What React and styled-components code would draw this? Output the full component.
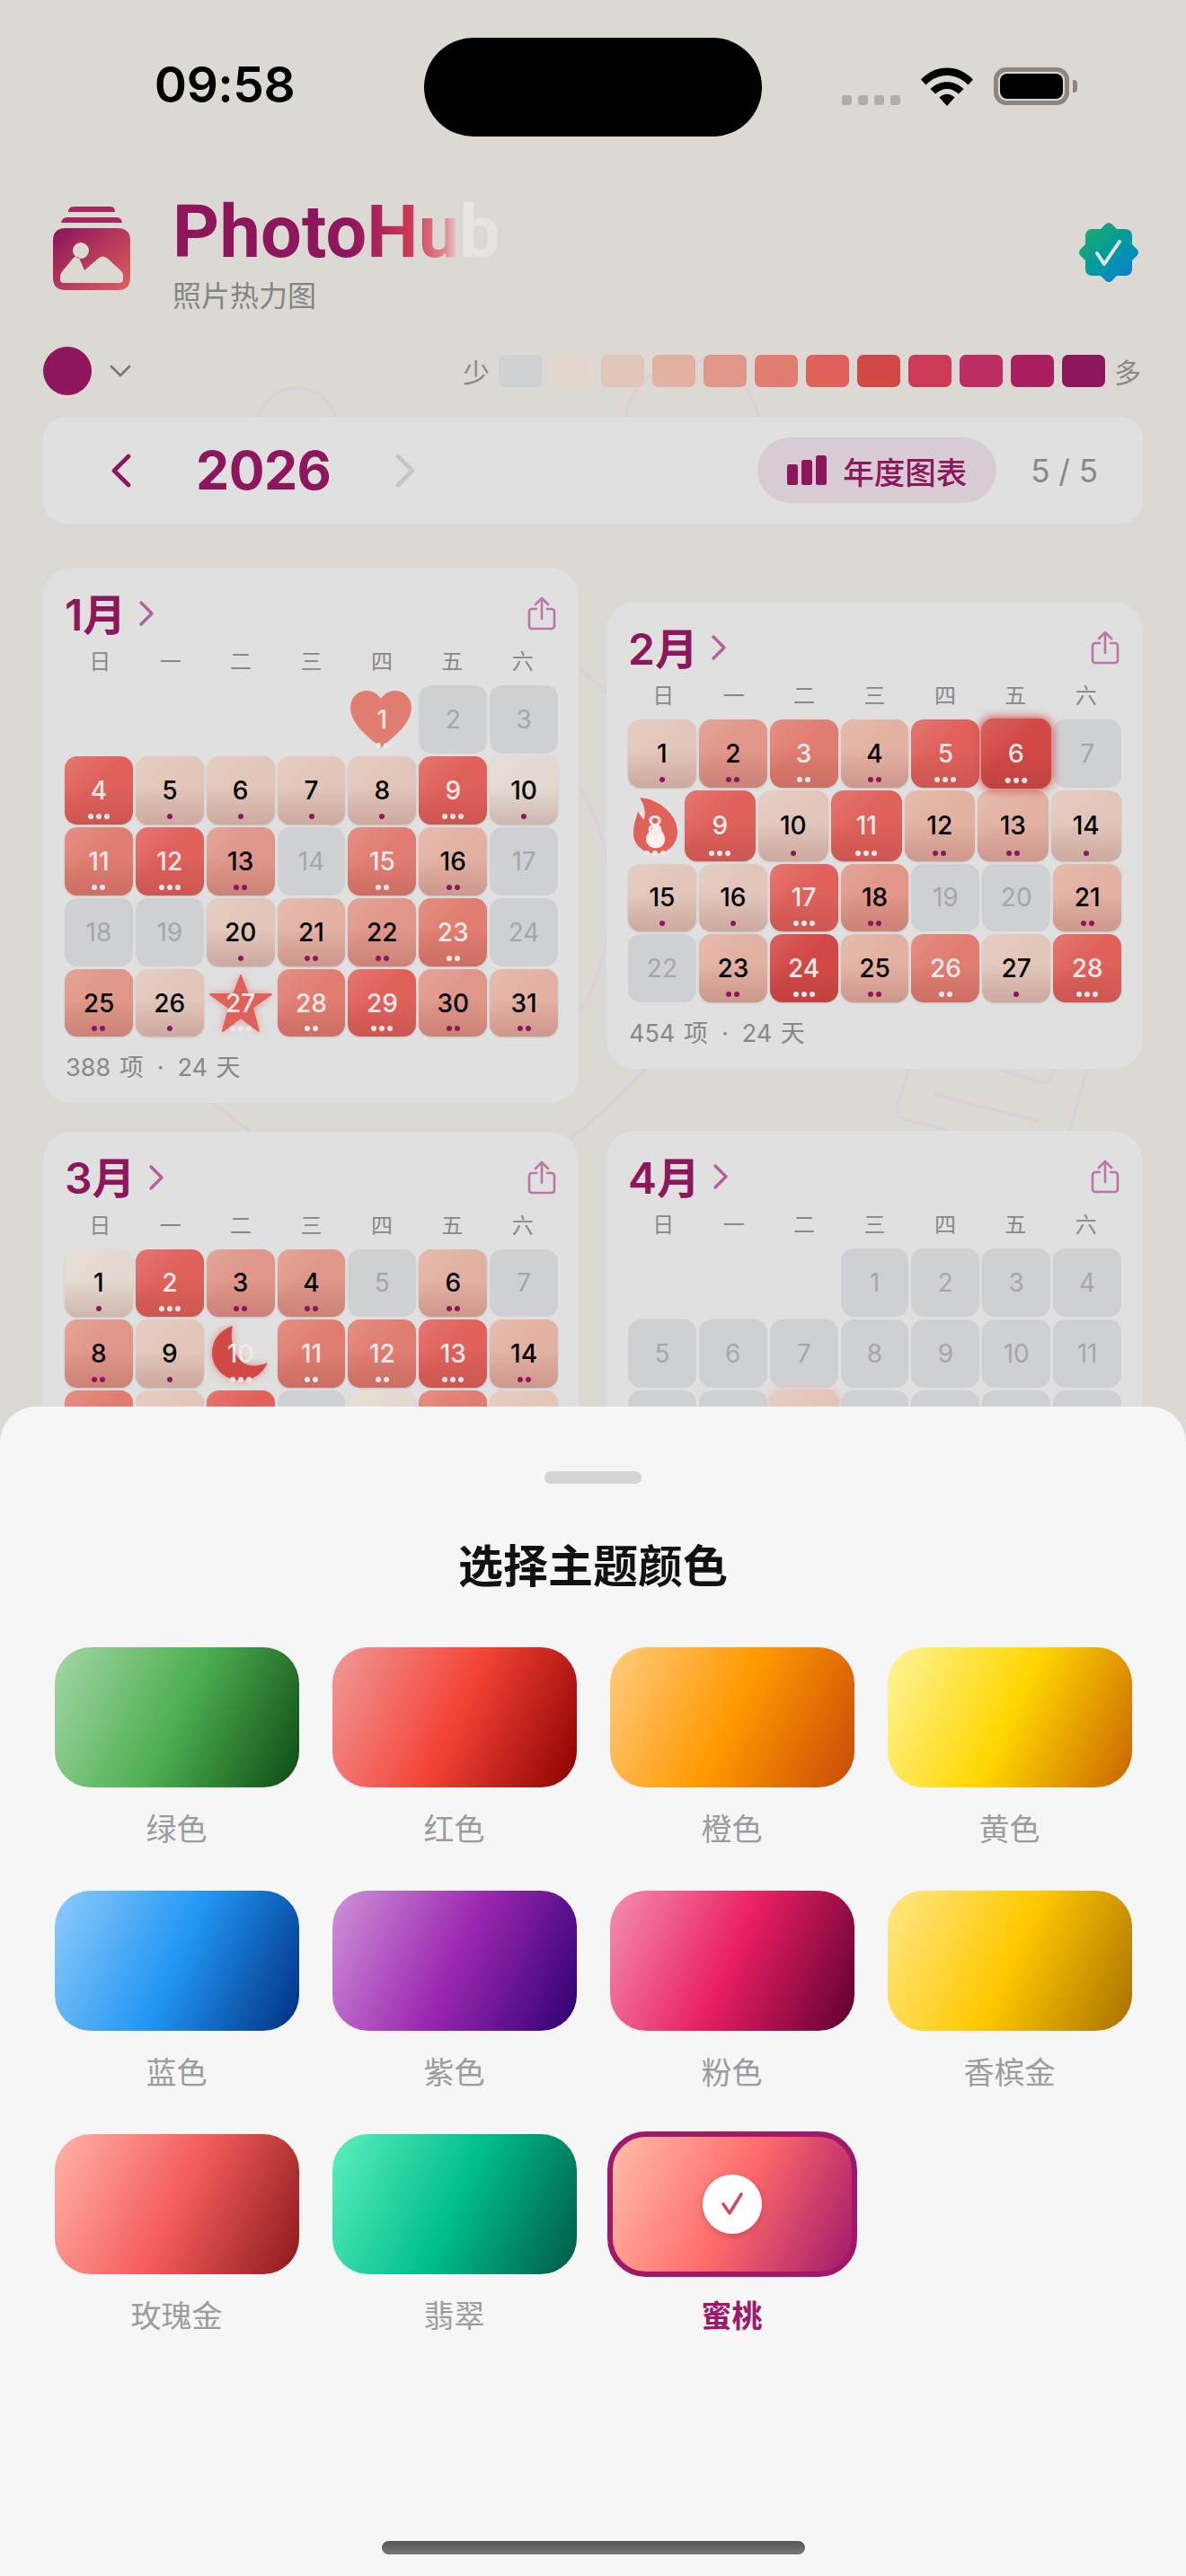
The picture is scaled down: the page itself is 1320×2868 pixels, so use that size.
import styled, { createGlobalStyle } from 'styled-components'

const FONT = `Inter, "Noto Sans CJK SC", "Noto Sans", sans-serif`
const PLUM = '#8e165c'

const LEGEND = ['#cfd0d4', '#e2d8ce', '#e2c6b9', '#e2b1a2', '#e09688', '#e07d70', '#e0605a', '#d24845', '#cd3a55', '#bd2c62', '#ab1e60', PLUM]
const LEVELS = ['#cfd0d4', '#e3d9d0', '#e2c6b9', '#e2b1a2', '#e09688', '#e07d70', '#e0605a', '#d24845']
const DOTS = [0, 1, 1, 2, 2, 2, 3, 3]

const MONTHS = [
    {
        name: '1月', start: 4, footer: ['388 项', '24 天'],
        levels: [5, 0, 0, 6, 2, 2, 2, 2, 6, 1, 5, 6, 4, 0, 5, 3, 0, 0, 0, 2, 3, 4, 5, 0, 4, 2, 6, 5, 6, 4, 3],
        shapes: { 1: 'heart', 27: 'star' },
    },
    {
        name: '2月', start: 0, footer: ['454 项', '24 天'],
        levels: [2, 4, 5, 3, 6, 7, 0, 6, 6, 2, 6, 3, 3, 2, 2, 2, 6, 4, 0, 0, 3, 0, 3, 7, 3, 5, 2, 6],
        shapes: { 8: 'flame' },
        hot: [6],
    },
    {
        name: '3月', start: 0,
        levels: [1, 6, 4, 4, 0, 3, 0, 4, 2, 7, 5, 5, 6, 3, 5, 2, 6, 0, 1, 5, 2, 0, 0, 0, 0, 0, 0, 0, 0, 0, 0],
        shapes: { 10: 'moon' },
    },
    {
        name: '4月', start: 3,
        levels: [0, 0, 0, 0, 0, 0, 0, 0, 0, 0, 0, 0, 0, 2, 0, 0, 0, 0, 0, 0, 0, 0, 0, 0, 0, 0, 0, 0, 0, 0],
        hot: [14],
    },
]

const THEMES = [
    { name: '绿色', colors: ['#a5d6a7', '#4caf50', '#0e4a14'] },
    { name: '红色', colors: ['#ef9a9a', '#f44336', '#8b0000'] },
    { name: '橙色', colors: ['#ffcc80', '#ff9800', '#c84a08'] },
    { name: '黄色', colors: ['#fff59d', '#ffd600', '#c86400'] },
    { name: '蓝色', colors: ['#90caf9', '#2196f3', '#002f80'] },
    { name: '紫色', colors: ['#ce93d8', '#9c27b0', '#2e0070'] },
    { name: '粉色', colors: ['#f48fb1', '#e91e63', '#5c0030'] },
    { name: '香槟金', colors: ['#ffe88a', '#ffc800', '#a87000'] },
    { name: '玫瑰金', colors: ['#ffb3a7', '#f45c5c', '#8b1a1a'] },
    { name: '翡翠', colors: ['#5eeebf', '#00bf8c', '#005a44'] },
    { name: '蜜桃', colors: ['#ffc0a9', '#ff6b6b', '#a0186a'], selected: true },
]

function buildWeeks(month) {
    const cells = Array(month.start).fill(null)
    month.levels.forEach((level, i) => cells.push({ day: i + 1, level }))
    while (cells.length % 7 !== 0) cells.push(null)
    const weeks = []
    for (let i = 0; i < cells.length; i += 7) weeks.push(cells.slice(i, i + 7))
    return weeks
}

function DayShape({ type }) {
    if (type === 'heart') {
        return (
            <ShapeSvg viewBox="0 0 76 76">
                <path fill="#e07d70" d="M37 70C30 62 3 46 3 25C3 13 12 6 21 6C28 6 34 10 37 15C40 10 46 6 53 6C62 6 71 13 71 25C71 46 44 62 37 70Z" />
            </ShapeSvg>
        )
    }
    if (type === 'star') {
        return (
            <ShapeSvg viewBox="0 0 76 76" $glow="rgba(224,96,90,.55)">
                <polygon fill="#e0605a" stroke="#e0605a" strokeWidth="2" strokeLinejoin="round" points="38,7 46,28 72,28 51,43 58,69 38,54 18,69 25,43 4,28 30,28" />
            </ShapeSvg>
        )
    }
    if (type === 'moon') {
        return (
            <ShapeSvg viewBox="0 0 76 76" $glow="rgba(210,72,69,.55)">
                <path fill="#d24845" d="M29 7C14 12 6 24 6 37C6 54 20 68 38 68C52 68 63 60 68 48C60 52 50 53 42 49C31 43 25 24 29 7Z" />
            </ShapeSvg>
        )
    }
    return (
        <ShapeSvg viewBox="0 0 60 78">
            <path fill="#e0605a" d="M13 8C30 8 55 24 55 46C55 60 44 70 31 70C17 70 6 60 6 48C6 38 9 31 11 23C13 27 16 31 18 32C20 24 18 15 13 8Z" />
            <path fill="#fff" opacity=".9" d="M31 37C27 37 26 40 27 43C23 46 20 49 20 54C20 60 25 64 31 64C37 64 41 60 41 54C41 49 38 45 35 43C36 40 35 37 31 37Z" />
        </ShapeSvg>
    )
}

function DayCell({ cell, shape, hot, narrow }) {
    const light = cell.level >= 5 || Boolean(shape)
    return (
        <Day $level={cell.level} $shape={Boolean(shape)} $hot={hot} $narrow={narrow}>
            {shape && <DayShape type={shape} />}
            <DayNumber $level={cell.level} $light={light}>{cell.day}</DayNumber>
            {cell.level > 0 && (
                <DayDots>
                    {Array.from({ length: DOTS[cell.level] }).map((_, i) => <Dot key={i} $light={light} />)}
                </DayDots>
            )}
        </Day>
    )
}

function MonthCard({ month }) {
    const weeks = buildWeeks(month)
    return (
        <Card>
            <CardHead>
                <MonthName>{month.name}</MonthName>
                <svg width="18" height="30" viewBox="0 0 18 30" fill="none" stroke="#b5609a" strokeWidth="3.4" strokeLinecap="round" strokeLinejoin="round">
                    <path d="M3 3L15 15L3 27" />
                </svg>
                <ShareIcon width="32" height="38" viewBox="0 0 32 38" fill="none" stroke="#bb76a4" strokeWidth="2.6" strokeLinecap="round" strokeLinejoin="round">
                    <path d="M10 14H5A3 3 0 0 0 2 17V33A3 3 0 0 0 5 36H27A3 3 0 0 0 30 33V17A3 3 0 0 0 27 14H22" />
                    <path d="M16 25V2M9 9L16 2L23 9" />
                </ShareIcon>
            </CardHead>
            <WeekLabels>
                {['日', '一', '二', '三', '四', '五', '六'].map((d) => <span key={d}>{d}</span>)}
            </WeekLabels>
            <Weeks>
                {weeks.map((week, w) => (
                    <Week key={w}>
                        {week.map((cell, i) => {
                            if (!cell) return <Blank key={i} />
                            const shape = month.shapes && month.shapes[cell.day]
                            return (
                                <DayCell
                                    key={i}
                                    cell={cell}
                                    shape={shape}
                                    narrow={shape === 'flame'}
                                    hot={month.hot && month.hot.includes(cell.day)}
                                />
                            )
                        })}
                    </Week>
                ))}
            </Weeks>
            {month.footer && (
                <CardFooter>
                    {month.footer[0]}
                    <FooterDot>·</FooterDot>
                    {month.footer[1]}
                </CardFooter>
            )}
        </Card>
    )
}

export default function App() {
    return (
        <Screen>
            <GlobalStyle />
            <Backdrop viewBox="0 0 1320 1566" fill="none" stroke="#d9d0da" strokeWidth="3">
                <circle cx="330" cy="477" r="45" />
                <circle cx="770" cy="477" r="75" />
                <path d="M636 738Q660 754 684 782" />
                <path d="M640 868A245 245 0 0 1 640 1135" />
                <path d="M225 1218Q250 1238 282 1262" />
                <path d="M725 1183Q690 1225 625 1275" />
                <path d="M1011 1191L999 1231Q997 1242 1006 1246L1058 1259" />
                <path d="M1040 1218L1157 1249" />
                <path d="M1113 1191L1160 1205Q1168 1206 1173 1191" />
                <path d="M1210 1191L1190 1259" />
            </Backdrop>

            <StatusBar>
                <Clock>09:58</Clock>
                <Island />
                <StatusIcons>
                    <SignalDots>{[0, 1, 2, 3].map((i) => <SignalDot key={i} />)}</SignalDots>
                    <svg width="58" height="43" viewBox="0 0 58 43">
                        <path d="M0 13.500C16 -4 42 -4 58 13.500L52.500 19.500C39 5.500 19 5.500 5.500 19.500Z" />
                        <path d="M10.500 24C21 13.500 37 13.500 47.500 24L42 29.500C34 22 24 22 16 29.500Z" />
                        <path d="M20.500 33.500C26 28.500 32 28.500 37.500 33.500L29 43Z" />
                    </svg>
                    <Battery>
                        <BatteryBody><BatteryFill /></BatteryBody>
                        <BatteryNub />
                    </Battery>
                </StatusIcons>
            </StatusBar>

            <Header>
                <svg width="88" height="94" viewBox="0 0 88 94">
                    <defs>
                        <linearGradient id="logoGrad" x1="0" y1="0.1" x2="1" y2="1">
                            <stop offset="0" stopColor="#8e165c" />
                            <stop offset="1" stopColor="#e0605a" />
                        </linearGradient>
                    </defs>
                    <path fill="#a8265e" d="M18 6Q18 0 24 0H65Q70 0 70 6Z" />
                    <path fill="#a8265e" d="M10 18Q11 12 17 12H72Q77 12 78 18Z" />
                    <path fill="url(#logoGrad)" fillRule="evenodd" d="M15 24H73Q87 24 87 38V79Q87 93 73 93H15Q1 93 1 79V38Q1 24 15 24ZM32 40A9 9 0 1 0 32 58A9 9 0 1 0 32 40ZM13 70Q9 74 9 78V81Q9 85 13 85H75Q79 85 79 81V76Q79 73 76 71L62 58Q56 53 51 58L36 71L30 57Q26 54 23 58Z" />
                </svg>
                <Brand>
                    <Title>PhotoHub</Title>
                    <Subtitle>照片热力图</Subtitle>
                </Brand>
                <Badge width="68" height="68" viewBox="0 0 68 68">
                    <defs>
                        <linearGradient id="badgeGrad" gradientUnits="userSpaceOnUse" x1="8" y1="8" x2="60" y2="60">
                            <stop offset="0" stopColor="#1fa96c" />
                            <stop offset="0.5" stopColor="#009c9c" />
                            <stop offset="1" stopColor="#0a7ed2" />
                        </linearGradient>
                    </defs>
                    <rect x="8" y="8" width="52" height="52" rx="7" fill="url(#badgeGrad)" />
                    <path fill="url(#badgeGrad)" d="M30.500 2.500Q34 -0.500 37.500 2.500L65.500 30.500Q68.500 34 65.500 37.500L37.500 65.500Q34 68.500 30.500 65.500L2.500 37.500Q-0.500 34 2.500 30.500Z" />
                    <path fill="none" stroke="#e4e4e4" strokeWidth="4" strokeLinecap="round" strokeLinejoin="round" d="M21 35L29 47L46 22" />
                </Badge>
            </Header>

            <Controls>
                <ThemeDot />
                <svg width="24" height="16" viewBox="0 0 24 16" fill="none" stroke="#777" strokeWidth="2.6" strokeLinecap="round" strokeLinejoin="round">
                    <path d="M2 3L12 13L22 3" />
                </svg>
                <Legend>
                    <LegendText>少</LegendText>
                    <LegendCells>
                        {LEGEND.map((color) => <LegendCell key={color} $color={color} />)}
                    </LegendCells>
                    <LegendText>多</LegendText>
                </Legend>
            </Controls>

            <YearBar>
                <svg width="22" height="38" viewBox="0 0 22 38" fill="none" stroke={PLUM} strokeWidth="4.6" strokeLinecap="round" strokeLinejoin="round">
                    <path d="M19 3L3 19L19 35" />
                </svg>
                <Year>2026</Year>
                <svg width="22" height="38" viewBox="0 0 22 38" fill="none" stroke="#c6c6c6" strokeWidth="4.6" strokeLinecap="round" strokeLinejoin="round">
                    <path d="M3 3L19 19L3 35" />
                </svg>
                <ChartButton>
                    <svg width="44" height="33" viewBox="0 0 44 33" fill={PLUM}>
                        <rect x="0" y="10" width="12" height="23" rx="2.500" />
                        <rect x="16" y="5" width="12" height="28" rx="2.500" />
                        <rect x="32" y="0" width="12" height="33" rx="2.500" />
                    </svg>
                    年度图表
                </ChartButton>
                <PageCount>5 / 5</PageCount>
            </YearBar>

            <MonthGrid>
                {MONTHS.map((month) => <MonthCard key={month.name} month={month} />)}
            </MonthGrid>

            <Sheet>
                <Handle />
                <SheetTitle>选择主题颜色</SheetTitle>
                <ThemeGrid>
                    {THEMES.map((theme) => (
                        <ThemeItem key={theme.name}>
                            <Swatch $colors={theme.colors} $selected={theme.selected}>
                                {theme.selected && (
                                    <CheckMark>
                                        <svg width="30" height="30" viewBox="0 0 30 30" fill="none" stroke="#c9505a" strokeWidth="3.6" strokeLinecap="round" strokeLinejoin="round">
                                            <path d="M5 15L12 25L25 4" />
                                        </svg>
                                    </CheckMark>
                                )}
                            </Swatch>
                            <ThemeName $selected={theme.selected}>{theme.name}</ThemeName>
                        </ThemeItem>
                    ))}
                </ThemeGrid>
                <HomeBar />
            </Sheet>
        </Screen>
    )
}

const GlobalStyle = createGlobalStyle`
    html, body {
        margin: 0;
        padding: 0;
        background: #dcd8d4;
    }
    * {
        box-sizing: border-box;
    }
`

const Screen = styled.div`
    position: relative;
    width: 1320px;
    height: 2868px;
    overflow: hidden;
    background: #dcd8d4;
    font-family: ${FONT};
    display: flex;
    flex-direction: column;
`

const Backdrop = styled.svg`
    position: absolute;
    top: 0;
    left: 0;
    width: 1320px;
    height: 1566px;
`

const StatusBar = styled.div`
    position: relative;
    display: grid;
    grid-template-columns: 472px 376px 1fr;
    align-items: center;
    padding-top: 42px;
    height: 152px;
`

const Clock = styled.div`
    font-size: 55px;
    font-weight: 600;
    text-align: center;
    color: #000;
    padding-left: 28px;
    margin-top: -6px;
    letter-spacing: -0.5px;
`

const Island = styled.div`
    height: 110px;
    border-radius: 55px;
    background: #000;
`

const StatusIcons = styled.div`
    display: flex;
    align-items: flex-start;
    padding: 0 0 0 89px;
    gap: 23px;
    margin-top: -2px;
`

const SignalDots = styled.div`
    display: flex;
    gap: 7px;
    margin-top: 31px;
`

const SignalDot = styled.div`
    width: 11px;
    height: 11px;
    border-radius: 3px;
    background: #b2ada8;
`

const Battery = styled.div`
    display: flex;
    align-items: center;
    gap: 4px;
`

const BatteryBody = styled.div`
    width: 84px;
    height: 42px;
    border: 5px solid #8b8682;
    border-radius: 14px;
    padding: 2px;
`

const BatteryFill = styled.div`
    height: 100%;
    border-radius: 8px;
    background: #000;
`

const BatteryNub = styled.div`
    width: 5px;
    height: 14px;
    border-radius: 0 4px 4px 0;
    background: #8b8682;
`

const Header = styled.div`
    position: relative;
    display: flex;
    align-items: flex-start;
    gap: 46px;
    padding: 78px 52px 0 58px;
    height: 234px;
`

const Brand = styled.div`
    display: flex;
    flex-direction: column;
    margin-top: -19px;
`

const Title = styled.div`
    width: 366px;
    font-family: Roboto, ${FONT};
    font-size: 81px;
    font-weight: 700;
    line-height: 96px;
    letter-spacing: 0.2px;
    color: transparent;
    background: linear-gradient(to right, ${PLUM} 0%, ${PLUM} 54%, #cd3755 72%, #e08a90 83%, #e9e6e4 88%, #e4e2e0 100%);
    -webkit-background-clip: text;
    background-clip: text;
`

const Subtitle = styled.div`
    font-size: 32px;
    line-height: 46px;
    color: #858585;
`

const Badge = styled.svg`
    margin-left: auto;
    margin-top: 17px;
`

const Controls = styled.div`
    position: relative;
    display: flex;
    align-items: center;
    gap: 20px;
    padding: 0 50px 0 48px;
    height: 54px;
`

const ThemeDot = styled.div`
    width: 54px;
    height: 54px;
    border-radius: 50%;
    background: ${PLUM};
`

const Legend = styled.div`
    margin-left: auto;
    display: flex;
    align-items: center;
    gap: 10px;
`

const LegendText = styled.span`
    font-size: 30px;
    color: #888;
`

const LegendCells = styled.div`
    display: flex;
    gap: 9px;
`

const LegendCell = styled.div`
    width: 48px;
    height: 36px;
    border-radius: 7px;
    background: ${(p) => p.$color};
`

const YearBar = styled.div`
    position: relative;
    display: flex;
    align-items: center;
    gap: 72px;
    margin: 24px 48px 0;
    height: 119px;
    padding: 0 50px 0 76px;
    border-radius: 26px;
    background: #e0e0e0;
`

const Year = styled.div`
    font-size: 59px;
    font-weight: 700;
    color: ${PLUM};
    letter-spacing: -0.5px;
`

const ChartButton = styled.div`
    margin-left: auto;
    display: flex;
    align-items: center;
    gap: 18px;
    height: 73px;
    padding: 0 33px;
    border-radius: 37px;
    background: #d8ccd4;
    font-size: 34.500px;
    font-weight: 500;
    color: ${PLUM};
`

const PageCount = styled.div`
    margin-left: -34px;
    font-size: 35px;
    color: #888;
`

const MonthGrid = styled.div`
    position: relative;
    display: grid;
    grid-template-columns: 596px 596px;
    column-gap: 31px;
    row-gap: 31px;
    align-items: center;
    padding: 0 48px;
    margin-top: 49px;
`

const Card = styled.div`
    padding: 24px 23px 19px 24px;
    border-radius: 32px;
    background: #e0e0e0;
`

const CardHead = styled.div`
    display: flex;
    align-items: center;
    gap: 14px;
    height: 54px;
    margin-bottom: 10px;
`

const MonthName = styled.div`
    margin-top: -5px;
    font-size: 48px;
    font-weight: 600;
    color: ${PLUM};
`

const ShareIcon = styled.svg`
    margin-left: auto;
    margin-right: 2px;
`

const WeekLabels = styled.div`
    display: grid;
    grid-template-columns: repeat(7, 1fr);
    height: 34px;
    margin-bottom: 9px;
    line-height: 34px;
    text-align: center;
    font-size: 24px;
    color: #888;
`

const Weeks = styled.div`
    display: flex;
    flex-direction: column;
    gap: 3px;
`

const Week = styled.div`
    display: flex;
    gap: 3px;
`

const Blank = styled.div`
    flex: 1 1 0;
    height: 76px;
`

const levelBackground = (level) => {
    if (level === 0) return LEVELS[0]
    return `linear-gradient(to bottom, rgba(120,50,50,0) 45%, rgba(120,50,50,.2) 100%), linear-gradient(135deg, rgba(255,255,255,.14), rgba(255,255,255,0) 45%), ${LEVELS[level]}`
}

const Day = styled.div`
    position: relative;
    flex: ${(p) => (p.$narrow ? '0 0 60px' : '1 1 0')};
    min-width: 0;
    aspect-ratio: ${(p) => (p.$narrow ? 'auto' : '1')};
    display: flex;
    align-items: center;
    justify-content: center;
    border-radius: 14px;
    background: ${(p) => (p.$shape ? 'none' : levelBackground(p.$level))};
    box-shadow: ${(p) => {
        if (p.$shape || p.$level === 0) return 'none'
        return p.$hot ? `0 0 10px ${LEVELS[p.$level]}` : '0 1px 2px rgba(90,60,60,.2)'
    }};
    transform: ${(p) => (p.$hot ? 'scale(1.03)' : 'none')};
    z-index: ${(p) => (p.$hot ? 1 : 0)};
`

const DayNumber = styled.span`
    position: relative;
    font-size: 28px;
    font-weight: ${(p) => (p.$level === 0 ? 400 : 500)};
    color: ${(p) => {
        if (p.$level === 0) return '#a6a6aa'
        return p.$light ? '#f2e9e8' : '#000'
    }};
`

const DayDots = styled.div`
    position: absolute;
    left: 0;
    right: 0;
    bottom: 6px;
    display: flex;
    justify-content: center;
    gap: 3px;
`

const Dot = styled.span`
    width: 6px;
    height: 6px;
    border-radius: 50%;
    background: ${(p) => (p.$light ? '#efe6e6' : PLUM)};
`

const ShapeSvg = styled.svg`
    position: absolute;
    top: 0;
    left: 0;
    width: 100%;
    height: 100%;
    overflow: visible;
    filter: ${(p) => (p.$glow ? `drop-shadow(0 0 5px ${p.$glow})` : 'none')};
`

const CardFooter = styled.div`
    margin-top: 15px;
    height: 40px;
    line-height: 40px;
    padding-left: 1px;
    font-size: 27px;
    word-spacing: 2px;
    color: #888;
`

const FooterDot = styled.span`
    margin: 0 15px;
`

const Sheet = styled.div`
    position: absolute;
    z-index: 2;
    left: 0;
    right: 0;
    top: 1566px;
    bottom: 0;
    padding: 72px 60px 0;
    border-radius: 40px 40px 0 0;
    background: #f6f6f6;
    display: flex;
    flex-direction: column;
    align-items: center;
`

const Handle = styled.div`
    width: 108px;
    height: 14px;
    border-radius: 7px;
    background: #d6d6d6;
`

const SheetTitle = styled.div`
    margin: 57px 0 55px;
    font-size: 50px;
    line-height: 70px;
    font-weight: 700;
    color: #111;
`

const ThemeGrid = styled.div`
    display: grid;
    grid-template-columns: repeat(4, 272px);
    column-gap: 37px;
    row-gap: 44px;
`

const ThemeItem = styled.div`
    display: flex;
    flex-direction: column;
    align-items: center;
`

const Swatch = styled.div`
    width: 100%;
    height: 156px;
    display: flex;
    align-items: center;
    justify-content: center;
    border-radius: 40px;
    background: linear-gradient(115deg, ${(p) => p.$colors[0]} 0%, ${(p) => p.$colors[1]} 50%, ${(p) => p.$colors[2]} 100%);
    outline: ${(p) => (p.$selected ? '6px solid #a0186a' : 'none')};
    outline-offset: -3px;
`

const CheckMark = styled.div`
    width: 66px;
    height: 66px;
    display: flex;
    align-items: center;
    justify-content: center;
    border-radius: 50%;
    background: #fff;
    box-shadow: 0 2px 6px rgba(120, 40, 50, .35);
`

const ThemeName = styled.div`
    margin-top: 23px;
    font-size: 34px;
    line-height: 48px;
    font-weight: ${(p) => (p.$selected ? 700 : 400)};
    color: ${(p) => (p.$selected ? '#a0186a' : '#9c9c9c')};
`

const HomeBar = styled.div`
    position: absolute;
    left: 425px;
    bottom: 24px;
    width: 471px;
    height: 15px;
    border-radius: 8px;
    background: linear-gradient(to bottom, #555, #777);
`
